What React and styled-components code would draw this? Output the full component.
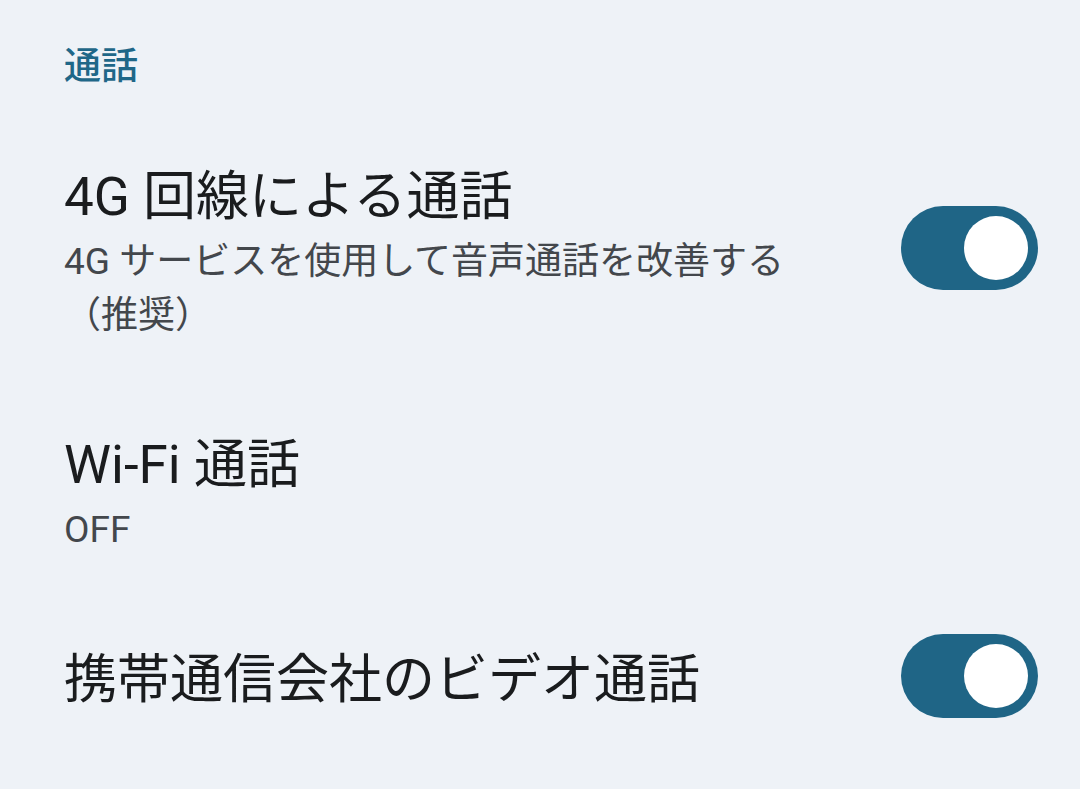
import styled, { createGlobalStyle } from "styled-components";

const GlobalStyle = createGlobalStyle`
  html, body {
    margin: 0;
    padding: 0;
    background: #eef2f7;
  }
  body {
    font-family: "Roboto", "Noto Sans CJK JP", sans-serif;
    -webkit-font-smoothing: antialiased;
  }
`;

const settings = [
  {
    id: "volte",
    title: "4G 回線による通話",
    summary: "4G サービスを使用して音声通話を改善する（推奨）",
    checked: true,
  },
  { id: "wifi", title: "Wi-Fi 通話", summary: "OFF" },
  { id: "video", title: "携帯通信会社のビデオ通話", checked: true },
];

// 토글 스위치
const Switch = ({ checked }) => (
  <Track $checked={checked} role="switch" aria-checked={checked}>
    <Thumb />
  </Track>
);

const SettingRow = ({ title, summary, checked }) => (
  <Row>
    <TextBlock>
      <Title>{title}</Title>
      {summary && <Summary>{summary}</Summary>}
    </TextBlock>
    {checked !== undefined && <Switch checked={checked} />}
  </Row>
);

const App = () => (
  <Page>
    <GlobalStyle />
    <Category>通話</Category>
    {settings.map((s) => (
      <SettingRow key={s.id} {...s} />
    ))}
  </Page>
);

export default App;

const Page = styled.div`
  min-height: 789px;
  padding-top: 40px;
  box-sizing: border-box;
  background: #eef2f7;
`;

const Category = styled.h3`
  margin: 0 0 24px;
  padding-left: 64px;
  font-size: 37px;
  line-height: 54px;
  font-weight: 500;
  color: #1f6788;
`;

const Row = styled.div`
  display: flex;
  align-items: center;
  padding: 42px 42px 43px 64px;
`;

const TextBlock = styled.div`
  flex: 1;
  min-width: 0;
  padding-right: 100px;
`;

const Title = styled.div`
  font-size: 53px;
  line-height: 75px;
  color: #1a1c1e;
`;

const Summary = styled.div`
  font-size: 37px;
  line-height: 54px;
  color: #43474c;
`;

const Track = styled.div`
  flex: none;
  width: 137px;
  height: 84px;
  margin-top: -8px;
  border-radius: 42px;
  background: ${(p) => (p.$checked ? "#1f6586" : "#72787e")};
  display: flex;
  align-items: center;
  justify-content: ${(p) => (p.$checked ? "flex-end" : "flex-start")};
  padding: 0 10px;
  box-sizing: border-box;
`;

const Thumb = styled.div`
  width: 64px;
  height: 64px;
  border-radius: 50%;
  background: #ffffff;
`;
